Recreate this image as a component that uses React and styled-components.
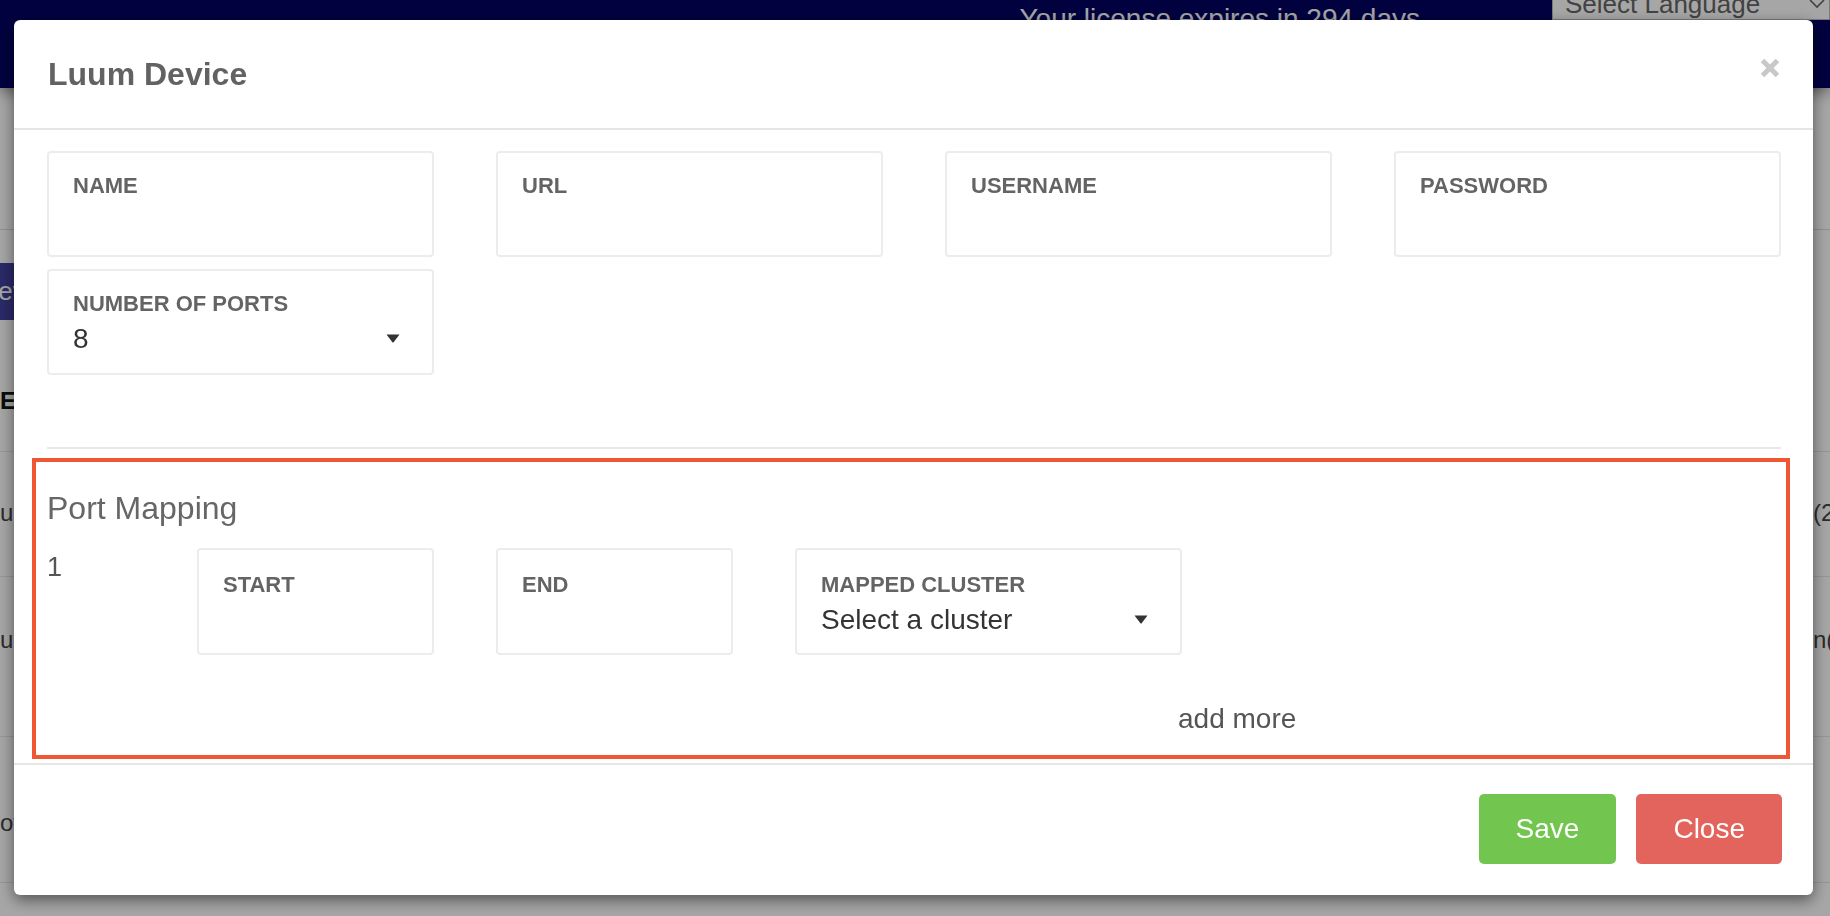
import React from "react";
import styled, { createGlobalStyle } from "styled-components";

const GlobalStyle = createGlobalStyle`
  html, body {
    margin: 0;
    padding: 0;
    height: 100%;
    overflow: hidden;
  }
  body {
    font-family: "Liberation Sans", Arial, Helvetica, sans-serif;
    background: #fff;
    color: #333;
  }
  * {
    box-sizing: border-box;
  }
`;

/* ---------- page behind the modal ---------- */

const Page = styled.div`
  min-height: 100vh;
  background: #fff;
`;

const TopBar = styled.header`
  position: relative;
  z-index: 1;
  height: 88px;
  padding-top: 2px;
  display: flex;
  justify-content: flex-end;
  align-items: flex-start;
  background: #030362;
  box-shadow: 0 4px 14px rgba(0, 0, 0, 0.45);
`;

const LicenseNote = styled.div`
  margin-right: 132px;
  font-size: 28px;
  line-height: 34px;
  color: #fff;
  white-space: nowrap;
`;

const LanguageSelect = styled.div`
  flex-shrink: 0;
  width: 278px;
  height: 32px;
  margin-top: -14px;
  padding: 0 4px 0 12px;
  display: flex;
  align-items: center;
  justify-content: space-between;
  background: #fff;
  border: 1px solid #bbb;
  font-size: 26px;
  color: #666;
`;

const SubBar = styled.div`
  height: 142px;
  border-bottom: 1px solid #ddd;
`;

const Toolbar = styled.div`
  height: 110px;
  padding-top: 33px;
`;

const NavyButton = styled.div`
  display: inline-flex;
  align-items: center;
  height: 57px;
  margin-left: -94px;
  padding: 0 20px;
  background: #41419f;
  color: #fff;
  font-size: 26px;
`;

const TableRow = styled.div`
  height: ${(p) => p.$height}px;
  padding-top: ${(p) => p.$top}px;
  display: flex;
  justify-content: space-between;
  align-items: flex-start;
  border-bottom: 1px solid #e6e6e6;
  font-size: 24px;
  font-weight: ${(p) => (p.$head ? 700 : 400)};
  color: ${(p) => (p.$head ? "#111" : "#444")};
`;

const EdgeCell = styled.div`
  width: 17px;
  overflow: hidden;
  white-space: nowrap;
`;

/* ---------- modal ---------- */

const Backdrop = styled.div`
  position: fixed;
  inset: 0;
  z-index: 10;
  background: rgba(0, 0, 0, 0.35);
`;

const Modal = styled.div`
  position: fixed;
  top: 20px;
  left: 14px;
  right: 17px;
  bottom: 21px;
  z-index: 11;
  display: flex;
  flex-direction: column;
  background: #fff;
  border-radius: 6px;
  box-shadow: 0 5px 15px rgba(0, 0, 0, 0.5);
`;

const ModalHeader = styled.div`
  flex-shrink: 0;
  height: 110px;
  padding: 0 33px 0 34px;
  display: flex;
  align-items: center;
  justify-content: space-between;
  border-bottom: 2px solid #e5e5e5;
`;

const Title = styled.h4`
  margin: 0;
  font-size: 32px;
  line-height: 38px;
  font-weight: 700;
  color: #626262;
`;

const CloseX = styled.button`
  margin-bottom: 12px;
  padding: 0;
  border: 0;
  background: none;
  display: flex;
  cursor: pointer;
`;

const ModalBody = styled.div`
  flex: 1;
  min-height: 0;
  padding: 21px 32px 0 33px;
`;

const FieldGrid = styled.div`
  display: grid;
  grid-template-columns: repeat(4, 1fr);
  column-gap: 62px;
  row-gap: 12px;
`;

const Field = styled.div`
  width: ${(p) => (p.$width ? `${p.$width}px` : "auto")};
  height: 106px;
  padding: 20px 24px 0;
  border: 2px solid #ececec;
  border-radius: 4px;
`;

const PortField = styled(Field)`
  height: 107px;
  padding-top: 22px;
`;

const Label = styled.div`
  font-size: 22px;
  line-height: 26px;
  font-weight: 700;
  color: #646464;
`;

const ValueRow = styled.div`
  margin-top: 6px;
  padding-right: 8px;
  display: flex;
  align-items: center;
  justify-content: space-between;
  font-size: 28px;
  line-height: 31px;
  color: #333;
`;

const Divider = styled.div`
  height: 2px;
  margin-top: 72px;
  background: #e8e8e8;
`;

const PortSection = styled.section`
  margin: 9px -9px 0 -15px;
  padding: 28px 0 19px 11px;
  border: 4px solid #ef5634;
`;

const SectionTitle = styled.div`
  font-size: 32px;
  line-height: 37px;
  color: #666;
`;

const PortRow = styled.div`
  margin-top: 21px;
  display: flex;
  align-items: flex-start;
`;

const PortIndex = styled.div`
  width: 150px;
  padding-top: 4px;
  font-size: 27px;
  line-height: 31px;
  color: #555;
`;

const PortFields = styled.div`
  display: flex;
  gap: 62px;
`;

const AddMore = styled.a`
  display: block;
  margin: 47px 0 0 1131px;
  font-size: 28px;
  line-height: 34px;
  color: #555;
  cursor: pointer;
`;

const ModalFooter = styled.div`
  flex-shrink: 0;
  padding: 29px 31px 31px;
  display: flex;
  justify-content: flex-end;
  gap: 20px;
  border-top: 2px solid #e5e5e5;
`;

const Button = styled.button`
  height: 70px;
  padding: 0 37px;
  border: 0;
  border-radius: 5px;
  font-family: inherit;
  font-size: 28px;
  color: #fff;
  background: ${(p) => (p.$variant === "save" ? "#72c64f" : "#e3645c")};
  cursor: pointer;
`;

const Caret = () => (
  <svg width="14" height="9" viewBox="0 0 14 9">
    <path d="M0.5 0.5 H13.5 L7.6 8.2 Q7 8.8 6.4 8.2 Z" fill="#333" />
  </svg>
);

function SelectField({ label, value, width }) {
  const Box = width ? PortField : Field;
  return (
    <Box $width={width}>
      <Label>{label}</Label>
      <ValueRow>
        <span>{value}</span>
        <Caret />
      </ValueRow>
    </Box>
  );
}

export default function App() {
  return (
    <>
      <GlobalStyle />
      <Page>
        <TopBar>
          <LicenseNote>Your license expires in 294 days</LicenseNote>
          <LanguageSelect>
            <span>Select Language</span>
            <svg width="16" height="10" viewBox="0 0 16 10">
              <path d="M1 1 L8 8 L15 1" fill="none" stroke="#666" strokeWidth="1.6" />
            </svg>
          </LanguageSelect>
        </TopBar>
        <SubBar />
        <Toolbar>
          <NavyButton>Add Device</NavyButton>
        </Toolbar>
        <TableRow $height={112} $top={47} $head>
          <EdgeCell>Enabled</EdgeCell>
          <EdgeCell />
        </TableRow>
        <TableRow $height={125} $top={47}>
          <EdgeCell>url</EdgeCell>
          <EdgeCell>(2)</EdgeCell>
        </TableRow>
        <TableRow $height={160} $top={49}>
          <EdgeCell>url</EdgeCell>
          <EdgeCell>n(8)</EdgeCell>
        </TableRow>
        <TableRow $height={146} $top={72}>
          <EdgeCell>off</EdgeCell>
          <EdgeCell />
        </TableRow>
      </Page>

      <Backdrop />
      <Modal>
        <ModalHeader>
          <Title>Luum Device</Title>
          <CloseX aria-label="Close">
            <svg width="20" height="20" viewBox="0 0 20 20">
              <path d="M2.5 2.5 L17.5 17.5 M17.5 2.5 L2.5 17.5" stroke="#c8c8c8" strokeWidth="5" />
            </svg>
          </CloseX>
        </ModalHeader>

        <ModalBody>
          <FieldGrid>
            <Field>
              <Label>NAME</Label>
            </Field>
            <Field>
              <Label>URL</Label>
            </Field>
            <Field>
              <Label>USERNAME</Label>
            </Field>
            <Field>
              <Label>PASSWORD</Label>
            </Field>
            <SelectField label="NUMBER OF PORTS" value="8" />
          </FieldGrid>

          <Divider />

          <PortSection>
            <SectionTitle>Port Mapping</SectionTitle>
            <PortRow>
              <PortIndex>1</PortIndex>
              <PortFields>
                <PortField $width={237}>
                  <Label>START</Label>
                </PortField>
                <PortField $width={237}>
                  <Label>END</Label>
                </PortField>
                <SelectField label="MAPPED CLUSTER" value="Select a cluster" width={387} />
              </PortFields>
            </PortRow>
            <AddMore>add more</AddMore>
          </PortSection>
        </ModalBody>

        <ModalFooter>
          <Button $variant="save">Save</Button>
          <Button $variant="close">Close</Button>
        </ModalFooter>
      </Modal>
    </>
  );
}
